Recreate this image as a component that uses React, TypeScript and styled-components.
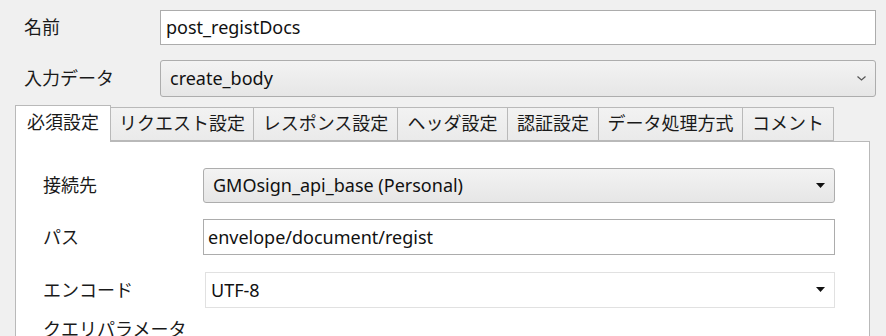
import React from "react";
import styled, { createGlobalStyle } from "styled-components";

const GlobalStyle = createGlobalStyle`
  html, body {
    margin: 0;
    padding: 0;
    background: #f0f0f0;
  }
  body {
    font-family: "Noto Sans", "Noto Sans CJK JP", sans-serif;
    font-size: 18px;
    color: #1a1a1a;
  }
`;

const Page = styled.div`
  width: 886px;
  height: 336px;
  overflow: hidden;
  padding-top: 10px;
  box-sizing: border-box;
`;

const TopRow = styled.div<{ $h: number; $mt?: number }>`
  display: flex;
  align-items: center;
  height: ${(p) => p.$h}px;
  margin-top: ${(p) => p.$mt ?? 0}px;
  padding-right: 10px;
`;

const TopLabel = styled.div`
  width: 136px;
  padding: 0 0 4px 24px;
  flex: none;
`;

const TextField = styled.input<{ $pl?: number }>`
  flex: 1;
  min-width: 0;
  height: 100%;
  box-sizing: border-box;
  border: 1px solid #acacac;
  background: #fff;
  font: inherit;
  color: #111;
  padding: 0 0 1px ${(p) => p.$pl ?? 5}px;
  outline: none;
  margin: 0;
`;

const ComboBox = styled.div<{ $flat?: boolean; $round?: boolean; $pl: number }>`
  flex: 1;
  height: 100%;
  box-sizing: border-box;
  display: flex;
  align-items: center;
  justify-content: space-between;
  padding: 0 9px 1px ${(p) => p.$pl}px;
  border: 1px solid ${(p) => (p.$flat ? "#e1e1e1" : "#adadad")};
  border-radius: ${(p) => (p.$round ? 3 : 0)}px;
  background: ${(p) =>
    p.$flat ? "#ffffff" : "linear-gradient(#f3f3f3, #e6e6e6)"};
  color: #111;
`;

const Chevron = () => (
  <svg width="9" height="5" viewBox="0 0 9 5">
    <polyline points="0.5,0.5 4.5,4 8.5,0.5" fill="none" stroke="#555" strokeWidth="1.2" />
  </svg>
);

const Triangle = () => (
  <svg width="9" height="5" viewBox="0 0 9 5">
    <polygon points="0,0 9,0 4.5,5" fill="#111" />
  </svg>
);

const TabStrip = styled.div`
  display: flex;
  align-items: flex-end;
  height: 36px;
  margin: 8px 0 0 15px;
  position: relative;
  z-index: 1;
`;

const Tab = styled.div<{ $active?: boolean; $w: number }>`
  width: ${(p) => p.$w}px;
  box-sizing: border-box;
  flex: none;
  display: flex;
  align-items: center;
  justify-content: center;
  height: ${(p) => (p.$active ? 37 : 34)}px;
  margin-bottom: ${(p) => (p.$active ? -1 : 0)}px;
  margin-left: ${(p) => (p.$active ? 0 : -1)}px;
  border: 1px solid #b9b9b9;
  border-bottom: ${(p) => (p.$active ? "none" : "1px solid #b9b9b9")};
  background: ${(p) => (p.$active ? "#ffffff" : "linear-gradient(#f2f2f2, #eaeaea)")};
  padding-bottom: ${(p) => (p.$active ? 7 : 4)}px;
  white-space: nowrap;
  &:first-child {
    margin-left: 0;
  }
`;

const Panel = styled.div`
  margin: 0 16px 0 15px;
  height: 220px;
  background: #fff;
  border: 1px solid #b9b9b9;
  border-bottom: none;
  padding: 26px 34px 0 27px;
  box-sizing: border-box;
`;

const PanelRow = styled.div<{ $h: number; $mt?: number }>`
  display: flex;
  align-items: center;
  height: ${(p) => p.$h}px;
  margin-top: ${(p) => p.$mt ?? 0}px;
`;

const PanelLabel = styled.div<{ $w?: number }>`
  width: ${(p) => p.$w ?? 160}px;
  padding-bottom: 3px;
  flex: none;
`;

const SectionLabel = styled.div`
  margin-top: 9px;
  line-height: 24px;
`;

const tabs: { label: string; w: number }[] = [
  { label: "必須設定", w: 96 },
  { label: "リクエスト設定", w: 144 },
  { label: "レスポンス設定", w: 145 },
  { label: "ヘッダ設定", w: 111 },
  { label: "認証設定", w: 92 },
  { label: "データ処理方式", w: 145 },
  { label: "コメント", w: 92 },
];

export default function App() {
  return (
    <>
      <GlobalStyle />
      <Page>
        <TopRow $h={35}>
          <TopLabel>名前</TopLabel>
          <TextField readOnly value="post_registDocs" />
        </TopRow>
        <TopRow $h={37} $mt={15}>
          <TopLabel>入力データ</TopLabel>
          <ComboBox $round $pl={9}>
            <span>create_body</span>
            <Chevron />
          </ComboBox>
        </TopRow>
        <TabStrip>
          {tabs.map((t, i) => (
            <Tab key={t.label} $active={i === 0} $w={t.w}>
              {t.label}
            </Tab>
          ))}
        </TabStrip>
        <Panel>
          <PanelRow $h={35}>
            <PanelLabel>接続先</PanelLabel>
            <ComboBox $round $pl={9}>
              <span>GMOsign_api_base (Personal)</span>
              <Triangle />
            </ComboBox>
          </PanelRow>
          <PanelRow $h={36} $mt={16}>
            <PanelLabel>パス</PanelLabel>
            <TextField readOnly value="envelope/document/regist" $pl={4} />
          </PanelRow>
          <PanelRow $h={36} $mt={17}>
            <PanelLabel $w={162}>エンコード</PanelLabel>
            <ComboBox $flat $pl={5}>
              <span>UTF-8</span>
              <Triangle />
            </ComboBox>
          </PanelRow>
          <SectionLabel>クエリパラメータ</SectionLabel>
        </Panel>
      </Page>
    </>
  );
}
